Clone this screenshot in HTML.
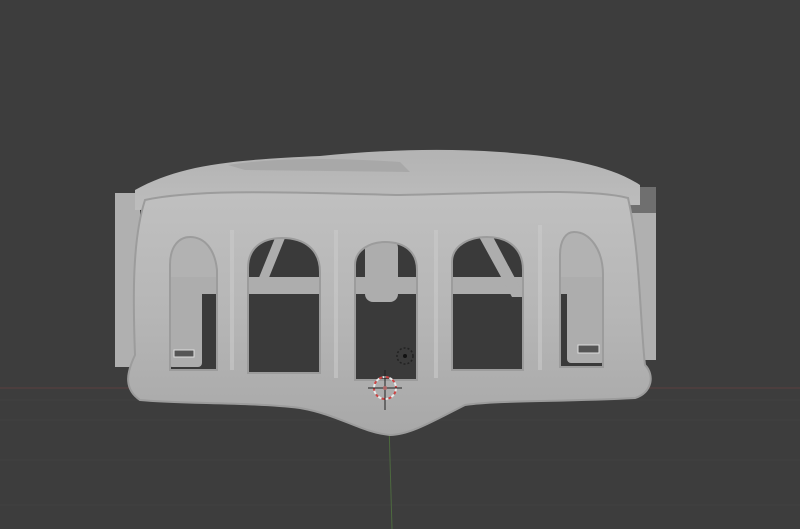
<!DOCTYPE html>
<html><head><style>html,body{margin:0;padding:0;background:#3d3d3d;overflow:hidden}svg{display:block}</style></head>
<body>
<svg width="800" height="529" viewBox="0 0 800 529" xmlns="http://www.w3.org/2000/svg">
<defs>
<linearGradient id="b" x1="0" y1="0" x2="0" y2="1">
<stop offset="0" stop-color="#c0c0c0"/><stop offset="0.5" stop-color="#b6b6b6"/><stop offset="1" stop-color="#a8a8a8"/></linearGradient>
<linearGradient id="t" x1="0" y1="0" x2="0" y2="1">
<stop offset="0" stop-color="#b3b3b3"/><stop offset="1" stop-color="#bdbdbd"/></linearGradient>
</defs>
<rect width="800" height="529" fill="#3d3d3d"/>
<g stroke="#444" stroke-width="1" opacity="0.6">
<line x1="0" y1="420" x2="800" y2="420"/><line x1="0" y1="460" x2="800" y2="460"/><line x1="0" y1="505" x2="800" y2="505"/>
<line x1="0" y1="400" x2="800" y2="400"/>
</g>
<line x1="0" y1="388" x2="800" y2="388" stroke="#5a3e3e" stroke-width="1"/>
<line x1="386" y1="320" x2="392" y2="529" stroke="#4d6a3f" stroke-width="1"/>
<rect x="115" y="193" width="25" height="174" fill="#b0b0b0"/>
<rect x="628" y="187" width="28" height="173" fill="#b0b0b0"/>
<rect x="628" y="187" width="28" height="26" fill="#6f6f6f"/>
<rect x="150" y="220" width="480" height="170" fill="#3a3a3a"/>
<rect x="160" y="225" width="60" height="67" fill="#b2b2b2"/>
<rect x="555" y="225" width="55" height="60" fill="#b2b2b2"/>
<g fill="#adadad">
<rect x="150" y="277" width="470" height="17"/>
<rect x="168" y="285" width="34" height="82" rx="4"/>
<rect x="567" y="283" width="38" height="80" rx="4"/>
<rect x="365" y="240" width="33" height="62" rx="8"/>
<path d="M478 235 L492 235 L525 297 L512 297 Z"/>
<path d="M258 280 L275 238 L285 238 L268 280 Z"/>
</g>
<rect x="174" y="350" width="20" height="7" fill="#555" stroke="#ddd" stroke-width="1"/>
<rect x="578" y="345" width="21" height="8" fill="#555" stroke="#ddd" stroke-width="1"/>
<path d="M135 190 C180 165 230 160 320 156 C380 150 440 148 500 152 C560 156 610 165 640 185 L640 205 L135 210 Z" fill="url(#t)"/>
<path d="M228 165 C280 157 340 158 400 162 L410 172 L245 170 Z" fill="#a8a8a8"/>
<path fill-rule="evenodd" fill="url(#b)" stroke="#9c9c9c" stroke-width="2" d="M145 200 C200 188 300 193 400 195 C500 193 590 188 628 198 C640 250 640 320 645 365 C655 375 652 393 635 398 C560 402 500 400 465 405 C435 420 410 435 390 435 C360 432 340 415 300 408 C250 402 180 404 140 400 C122 388 128 370 135 355 C133 300 132 240 145 200 Z
M170 370 L170 265 C170 245 180 237 190 237 C205 237 215 250 217 270 L217 370 Z
M248 373 L248 268 C248 248 262 238 282 238 C305 238 320 250 320 272 L320 373 Z
M355 380 L355 265 C355 250 370 242 385 242 C405 242 417 252 417 270 L417 380 Z
M452 370 L452 262 C452 245 470 237 487 237 C510 237 523 250 523 270 L523 370 Z
M560 367 L560 255 C560 240 566 232 574 232 C590 232 603 250 603 275 L603 367 Z"/>
<g stroke="#c9c9c9" stroke-width="4" opacity="0.6" fill="none">
<line x1="232" y1="230" x2="232" y2="370"/><line x1="336" y1="230" x2="336" y2="378"/><line x1="436" y1="230" x2="436" y2="378"/><line x1="540" y1="225" x2="540" y2="370"/>
</g>
<circle cx="385" cy="388" r="11" fill="none" stroke="#e9e9e9" stroke-width="2" stroke-dasharray="4 3"/>
<circle cx="385" cy="388" r="11" fill="none" stroke="#c44" stroke-width="2" stroke-dasharray="3 4" stroke-dashoffset="3.5"/>
<line x1="368" y1="388" x2="402" y2="388" stroke="#222" stroke-width="1"/>
<line x1="385" y1="370" x2="385" y2="410" stroke="#222" stroke-width="1"/>
<circle cx="385" cy="388" r="2" fill="#a66"/>
<circle cx="405" cy="356" r="8" fill="none" stroke="#222" stroke-width="1.5" stroke-dasharray="2 2"/>
<circle cx="405" cy="356" r="2" fill="#111"/>
</svg>
</body></html>
